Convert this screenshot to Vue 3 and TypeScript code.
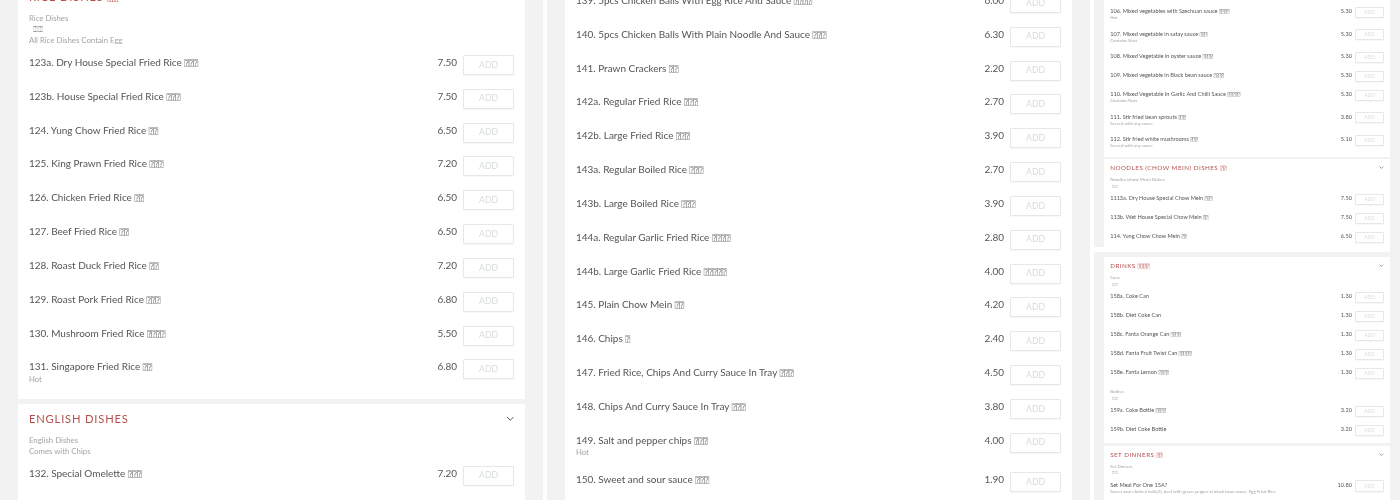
<script setup lang="ts">
interface Item {
  name: string
  tofu?: number
  price: string
  desc?: string
}
interface Group {
  lines: string[]
  items: Item[]
}
interface Section {
  title?: string
  titleTofu?: number
  groups: Group[]
  seam?: boolean
}
interface Panel {
  key: string
  sections: Section[]
}

const panels: Panel[] = [
  {
    key: 'left',
    sections: [
      {
        title: 'Rice Dishes',
        titleTofu: 2,
        groups: [
          {
            lines: ['Rice Dishes', '  ⍰⍰', 'All Rice Dishes Contain Egg'],
            items: [
              { name: '123a. Dry House Special Fried Rice', tofu: 3, price: '7.50' },
              { name: '123b. House Special Fried Rice', tofu: 3, price: '7.50' },
              { name: '124. Yung Chow Fried Rice', tofu: 2, price: '6.50' },
              { name: '125. King Prawn Fried Rice', tofu: 3, price: '7.20' },
              { name: '126. Chicken Fried Rice', tofu: 2, price: '6.50' },
              { name: '127. Beef Fried Rice', tofu: 2, price: '6.50' },
              { name: '128. Roast Duck Fried Rice', tofu: 2, price: '7.20' },
              { name: '129. Roast Pork Fried Rice', tofu: 3, price: '6.80' },
              { name: '130. Mushroom Fried Rice', tofu: 4, price: '5.50' },
              { name: '131. Singapore Fried Rice', tofu: 2, price: '6.80', desc: 'Hot' },
            ],
          },
        ],
      },
      {
        title: 'English Dishes',
        groups: [
          {
            lines: ['English Dishes', 'Comes with Chips'],
            items: [
              { name: '132. Special Omelette', tofu: 3, price: '7.20' },
              { name: '133. Chicken Omelette', tofu: 3, price: '6.50' },
            ],
          },
        ],
      },
    ],
  },
  {
    key: 'middle',
    sections: [
      {
        groups: [
          {
            lines: [],
            items: [
              { name: '139. 5pcs Chicken Balls With Egg Rice And Sauce', tofu: 4, price: '6.00' },
              { name: '140. 5pcs Chicken Balls With Plain Noodle And Sauce', tofu: 3, price: '6.30' },
              { name: '141. Prawn Crackers', tofu: 2, price: '2.20' },
              { name: '142a. Regular Fried Rice', tofu: 3, price: '2.70' },
              { name: '142b. Large Fried Rice', tofu: 3, price: '3.90' },
              { name: '143a. Regular Boiled Rice', tofu: 3, price: '2.70' },
              { name: '143b. Large Boiled Rice', tofu: 3, price: '3.90' },
              { name: '144a. Regular Garlic Fried Rice', tofu: 4, price: '2.80' },
              { name: '144b. Large Garlic Fried Rice', tofu: 5, price: '4.00' },
              { name: '145. Plain Chow Mein', tofu: 2, price: '4.20' },
              { name: '146. Chips', tofu: 1, price: '2.40' },
              { name: '147. Fried Rice, Chips And Curry Sauce In Tray', tofu: 3, price: '4.50' },
              { name: '148. Chips And Curry Sauce In Tray', tofu: 3, price: '3.80' },
              { name: '149. Salt and pepper chips', tofu: 3, price: '4.00', desc: 'Hot' },
              { name: '150. Sweet and sour sauce', tofu: 3, price: '1.90' },
            ],
          },
        ],
      },
    ],
  },
  {
    key: 'right',
    sections: [
      {
        groups: [
          {
            lines: [],
            items: [
              { name: '106. Mixed vegetables with Szechuan sauce', tofu: 4, price: '5.30', desc: 'Hot' },
              { name: '107. Mixed vegetable in satay sauce', tofu: 3, price: '5.30', desc: 'Contains Nuts' },
              { name: '108. Mixed Vegetable in oyster sauce', tofu: 4, price: '5.30' },
              { name: '109. Mixed vegetable in Black bean sauce', tofu: 4, price: '5.30' },
              { name: '110. Mixed Vegetable In Garlic And Chilli Sauce', tofu: 5, price: '5.30', desc: 'Contains Nuts' },
              { name: '111. Stir fried bean sprouts', tofu: 3, price: '3.80', desc: 'Served with any sauce' },
              { name: '112. Stir fried white mushrooms', tofu: 3, price: '5.10', desc: 'Served with any sauce' },
            ],
          },
        ],
      },
      {
        title: 'Noodles (Chow Mein) Dishes',
        titleTofu: 2,
        seam: true,
        groups: [
          {
            lines: ['Noodles (chow Mein) Dishes', '  ⍰⍰'],
            items: [
              { name: '1113a. Dry House Special Chow Mein', tofu: 3, price: '7.50' },
              { name: '113b. Wet House Special Chow Mein', tofu: 2, price: '7.50' },
              { name: '114. Yung Chow Chow Mein', tofu: 2, price: '6.50' },
            ],
          },
        ],
      },
      {
        title: 'Drinks',
        titleTofu: 4,
        groups: [
          {
            lines: ['Cans', '  ⍰⍰'],
            items: [
              { name: '158a. Coke Can', price: '1.30' },
              { name: '158b. Diet Coke Can', price: '1.30' },
              { name: '158c. Fanta Orange Can', tofu: 4, price: '1.30' },
              { name: '158d. Fanta Fruit Twist Can', tofu: 5, price: '1.30' },
              { name: '158e. Fanta Lemon', tofu: 4, price: '1.30' },
            ],
          },
          {
            lines: ['Bottles', '  ⍰⍰'],
            items: [
              { name: '159a. Coke Bottle', tofu: 4, price: '3.20' },
              { name: '159b. Diet Coke Bottle', price: '3.20' },
            ],
          },
        ],
      },
      {
        title: 'Set Dinners',
        titleTofu: 2,
        groups: [
          {
            lines: ['Set Dinners', '  ⍰⍰'],
            items: [
              {
                name: 'Set Meal For One 15A?',
                price: '10.80',
                desc: 'Sweet sour chicken balls(3), beef with green pepper in black bean sauce, Egg Fried Rice',
              },
            ],
          },
        ],
      },
    ],
  },
]

function marks(n?: number) {
  return '⍰'.repeat(n ?? 0)
}
</script>

<template>
  <div class="page">
    <div v-for="panel in panels" :key="panel.key" class="panel" :class="panel.key">
      <div class="scroll">
        <section
          v-for="(section, i) in panel.sections"
          :key="i"
          class="card"
          :class="{ seam: section.seam }"
        >
          <header v-if="section.title" class="head">
            <h2 class="title">
              {{ section.title }} <span class="tofu">{{ marks(section.titleTofu) }}</span>
            </h2>
            <svg class="chevron" viewBox="0 0 12 8" aria-hidden="true">
              <path d="M1.5 1.5 6 6l4.5-4.5" fill="none" stroke="#444" stroke-width="1.3" />
            </svg>
          </header>
          <div v-for="(group, g) in section.groups" :key="g" class="group">
            <div v-if="group.lines.length" class="intro">
              <p v-for="line in group.lines" :key="line">{{ line }}</p>
            </div>
            <div v-for="item in group.items" :key="item.name" class="row">
              <div class="info">
                <div class="name">
                  {{ item.name }} <span class="tofu">{{ marks(item.tofu) }}</span>
                </div>
                <div v-if="item.desc" class="desc">{{ item.desc }}</div>
              </div>
              <span class="price">{{ item.price }}</span>
              <button class="add" type="button">ADD</button>
            </div>
          </div>
        </section>
      </div>
    </div>
  </div>
</template>

<style>
html,
body {
  margin: 0;
  background: #fff;
  overflow: hidden;
}
</style>

<style scoped>
.page {
  display: flex;
  height: 500px;
  width: 1400px;
  overflow: hidden;
  gap: 4px;
  background: #fff;
  font-family: Lato, 'Open Sans', sans-serif;
}

.panel {
  height: 500px;
  overflow: hidden;
  background: #f2f2f2;
  box-sizing: border-box;
  filter: blur(0.4px);
}

.left {
  width: 543px;
  padding: 0 18px;
  font-size: 11.4px;
}

.left .scroll {
  margin-top: -18px;
}

.left .card:first-child {
  padding-bottom: 1px;
}

.middle {
  width: 543px;
  padding: 0 18px;
  font-size: 11.4px;
}

.middle .scroll {
  margin-top: -8px;
}

.right {
  width: 306px;
  padding: 0 10px;
  font-size: 6.4px;
  filter: blur(0.55px);
}

.right .card:first-child {
  padding-top: 6px;
}

.right .intro {
  line-height: 1.55em;
  padding: 0.2em 0 0.6em;
}

.card {
  position: relative;
  background: #fff;
  padding: 0 0.96em;
  margin-bottom: 0.44em;
}

.group + .group {
  margin-top: 0.3em;
}

.seam {
  margin-bottom: 10px;
}

.seam .row:last-child {
  padding-bottom: 5px;
}

/* stitched screenshot edge: white strip under the card */
.seam::after {
  content: '';
  position: absolute;
  top: 100%;
  left: -10px;
  right: 0;
  height: 5px;
  background: #fff;
}

.head {
  display: flex;
  align-items: center;
  justify-content: space-between;
  height: 2.63em;
}

.title {
  margin: 0;
  font-size: 0.98em;
  font-weight: 400;
  letter-spacing: 0.075em;
  text-transform: uppercase;
  color: #b5504e;
}

.title .tofu {
  color: #c9716f;
}

.chevron {
  width: 0.75em;
  height: 0.5em;
}

.intro {
  font-size: 0.685em;
  line-height: 1.41em;
  color: #a3a3a3;
  padding: 0.13em 0 1.02em;
}

.intro p {
  margin: 0;
  white-space: pre;
}

.row {
  display: flex;
  align-items: flex-start;
  padding-bottom: 1.22em;
}

.info {
  flex: 1;
  min-width: 0;
}

.name {
  font-size: 0.875em;
  line-height: 1.7em;
  color: #555;
}

.desc {
  font-size: 0.685em;
  line-height: 1.41em;
  margin: -0.35em 0 -0.1em;
  color: #a3a3a3;
  white-space: nowrap;
}

.tofu {
  font-family: 'DejaVu Sans', 'DejaVu Sans Mono', monospace;
  font-size: 0.82em;
  letter-spacing: -0.05em;
  color: #888;
}

.price {
  font-size: 0.875em;
  line-height: 1.7em;
  color: #555;
  margin-right: 0.6em;
}

.add {
  flex: none;
  box-sizing: border-box;
  width: 5.88em;
  height: 2.3em;
  margin: 0.115em 0 -0.115em;
  padding: 0;
  background: #fff;
  border: 1px solid #e4e8e8;
  border-radius: 1px;
  box-shadow: 0 1px 1px rgba(0, 0, 0, 0.03);
  font-family: inherit;
  font-size: 0.76em;
  line-height: 1;
  color: #d8dcdc;
}
</style>
